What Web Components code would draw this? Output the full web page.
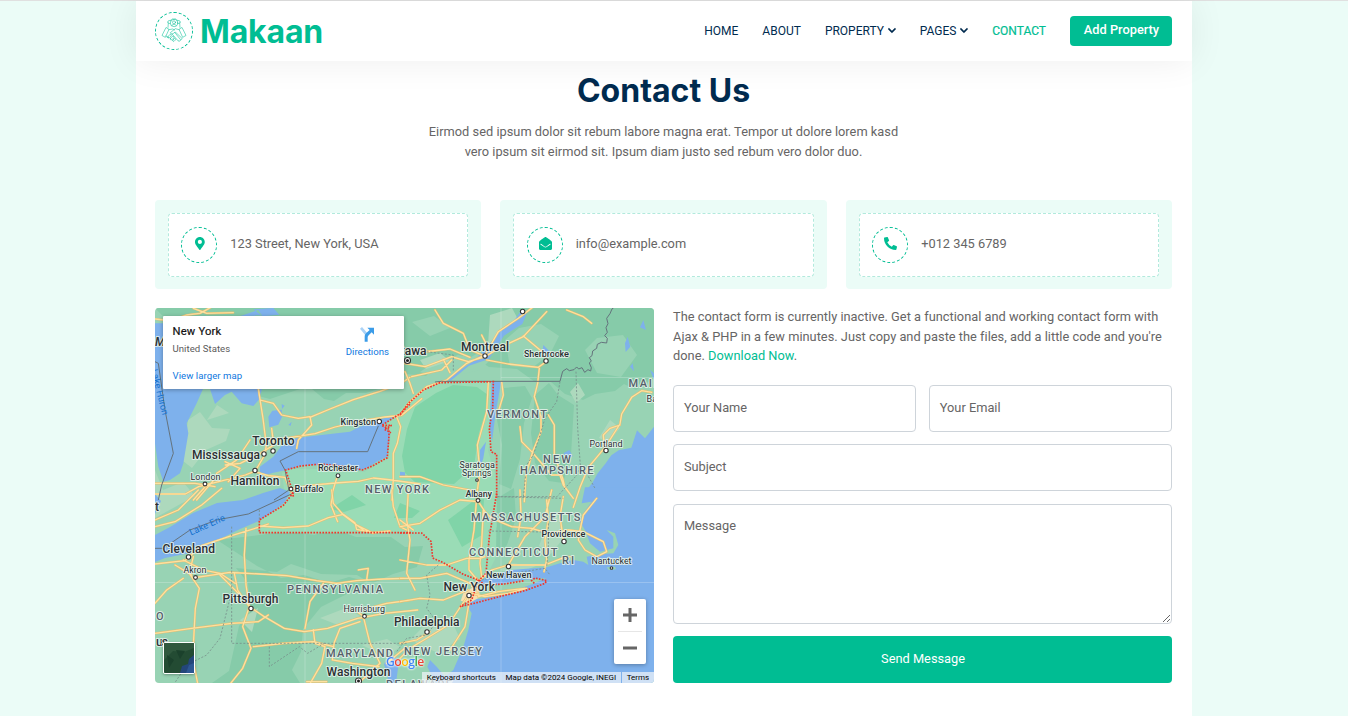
<!DOCTYPE html>
<html lang="en">
<head>
<meta charset="utf-8">
<title>Makaan - Contact</title>
<style>
:root{--primary:#00bd93;--mint:#ebfcf7;--dark:#002b4f;--body:#666565}
html,body{margin:0;height:100%;overflow:hidden}
body{background:var(--mint);font:12.8px/19.2px Roboto,"Liberation Sans",sans-serif;color:var(--body)}
</style>
</head>
<body>
<makaan-page></makaan-page>
<script>
const define = (name, css, html) => customElements.define(name, class extends HTMLElement {
  constructor() {
    super();
    const t = document.createElement('template');
    t.innerHTML = `<style>*{box-sizing:border-box}${css}</style>${typeof html === 'function' ? html(this) : html}`;
    this.attachShadow({ mode: 'open' }).append(t.content.cloneNode(true));
  }
});

const ICONS = {
  pin: ['384', 'M172.268 501.67C26.97 291.031 0 269.413 0 192 0 85.961 85.961 0 192 0s192 85.961 192 192c0 77.413-26.97 99.031-172.268 309.67-9.535 13.774-29.93 13.773-39.464 0zM192 272c44.183 0 80-35.817 80-80s-35.817-80-80-80-80 35.817-80 80 35.817 80 80 80z'],
  mail: ['512', 'M512 464c0 26.51-21.49 48-48 48H48c-26.51 0-48-21.49-48-48V200.724a48 48 0 0 1 18.387-37.776c24.913-19.529 45.501-35.365 164.2-121.511C199.412 29.17 232.797-.347 256 .003c23.198-.354 56.596 29.172 73.413 41.433 118.687 86.137 139.303 101.995 164.2 121.512A48 48 0 0 1 512 200.724V464zm-65.666-196.605c-2.563-3.728-7.7-4.595-11.339-1.907-22.845 16.873-55.462 40.705-105.582 77.079-16.825 12.266-50.21 41.781-73.413 41.43-23.211.344-56.559-29.143-73.413-41.43-50.114-36.37-82.734-60.204-105.582-77.079-3.639-2.688-8.776-1.821-11.339 1.907l-9.072 13.196a7.998 7.998 0 0 0 1.839 10.967c22.887 16.899 55.454 40.69 105.303 76.868 20.274 14.781 56.524 47.813 92.264 47.573 35.724.242 71.961-32.771 92.264-47.573 49.85-36.179 82.418-59.97 105.303-76.868a7.998 7.998 0 0 0 1.839-10.967l-9.071-13.196z'],
  phone: ['512', 'M497.39 361.8l-112-48a24 24 0 0 0-28 6.9l-49.6 60.6A370.66 370.66 0 0 1 130.6 204.11l60.6-49.6a23.94 23.94 0 0 0 6.9-28l-48-112A24.16 24.16 0 0 0 122.6.61l-104 24A24 24 0 0 0 0 48c0 256.5 207.9 464 464 464a24 24 0 0 0 23.4-18.6l24-104a24.29 24.29 0 0 0-14.01-27.6z'],
  chevron: ['448', 'M207.029 381.476L12.686 187.132c-9.373-9.373-9.373-24.569 0-33.941l22.667-22.667c9.357-9.357 24.522-9.375 33.901-.04L224 284.505l154.745-154.021c9.379-9.335 24.544-9.317 33.901.04l22.667 22.667c9.373 9.373 9.373 24.569 0 33.941L240.971 381.476c-9.373 9.372-24.569 9.372-33.942 0z']
};
const icon = (n, h) => `<svg viewBox="0 0 ${ICONS[n][0]} 512" height="${h}" width="${h * ICONS[n][0] / 512}" fill="currentColor"><path d="${ICONS[n][1]}"/></svg>`;

define('makaan-logo',
  `:host{display:flex;align-items:center;color:var(--primary)}
   .ring{width:38px;height:38px;border:1px dashed;border-radius:50%;display:grid;place-items:center;margin-right:7px}
   .name{font:700 32px/38px Inter,"Liberation Sans",sans-serif;letter-spacing:-.15px;padding-top:1px}`,
  `<span class="ring"><svg width="26" height="26" viewBox="0 0 78 78" fill="none" stroke="currentColor" stroke-width="1.6" stroke-linejoin="round" stroke-linecap="round">
    <circle cx="39" cy="15" r="11"/><circle cx="39" cy="13" r="4.5"/><path d="M32 23c1-5 13-5 14 0M28 9l6-6h10l6 6M27 17l-7-3 1-5 7-2M51 17l7-3-1-5-7-2M22 15l-1 13M56 15l1 13"/>
    <path d="M16 29l8 5-11 24-9-5zM62 29l-8 5 11 24 9-5zM24 35l11-2 6 3M54 35l-11-3-15 12c1 5 8 5 12 0l4-1 17 16M15 54l8 5M41 43l16 20M34 49l17 19M20 57l7-8c4-1 5 2 3 5l-4 5c-4 2-8 0-6-2zM28 62l6-7c4-1 6 2 4 5l-5 5c-4 1-7 0-5-3zM36 66l4-5c4 0 5 3 3 5l-4 4c-4 1-5-2-3-4zM52 69c4 2 7 0 6-4 4 1 6-2 5-5"/>
  </svg></span><span class="name">Makaan</span>`);

define('nav-link',
  `:host{display:flex;align-items:center;gap:4px;font-size:12px;color:var(--dark)}
   span{padding-top:1px}
   svg{stroke:currentColor;stroke-width:20}
   :host([active]){color:var(--primary);-webkit-text-stroke:.2px}`,
  el => `<span><slot></slot></span>${el.hasAttribute('menu') ? icon('chevron', 9) : ''}`);

define('site-nav',
  `:host{display:flex;justify-content:space-between;align-items:center;height:60px;padding:0 20px 0 19px;background:#fff;
     box-shadow:0 0 36px rgba(0,0,0,.07);position:relative;z-index:1}
   nav{display:flex;align-items:center;gap:24px}
   .btn{width:102px;height:30px;border-radius:4px;background:var(--primary);color:#fff;font-weight:500;font-size:12.8px;line-height:28px;text-align:center;padding-left:1px}`,
  `<makaan-logo></makaan-logo>
   <nav><nav-link>HOME</nav-link><nav-link>ABOUT</nav-link><nav-link menu>PROPERTY</nav-link><nav-link menu>PAGES</nav-link><nav-link active>CONTACT</nav-link><span class="btn">Add Property</span></nav>`);

define('info-card',
  `:host{display:block;flex:1;background:var(--mint);border-radius:4px;padding:12.8px;height:89.2px}
   .in{height:64px;border:1px dashed rgba(0,185,142,.3);border-radius:4px;background:#fff;display:flex;align-items:center;padding:0 12.8px}
   .ring{width:36px;height:36px;border:1px dashed var(--primary);border-radius:50%;display:grid;place-items:center;color:var(--primary);margin-right:12.8px}
   svg{display:block;margin:-3px 0 0 .8px}
   .t{padding-bottom:2px}`,
  el => `<div class="in"><span class="ring">${icon(el.getAttribute('icon'), 13)}</span><span class="t"><slot></slot></span></div>`);

const city = (x, y, r = 2.2) => `<circle cx="${x}" cy="${y}" r="${r}" fill="#fff" stroke="#333" stroke-width="1.1"/>`;
const label = (t, x1, x2, y, c) => `<text class="${c}" x="${x1}" y="${y}" textLength="${x2 - x1}">${t}</text>`;

define('map-canvas',
  `:host{display:block}
   svg{display:block;width:100%;height:100%}
   text{font-family:Roboto,"Liberation Sans",sans-serif;paint-order:stroke;stroke:#e6f3ec;stroke-opacity:.85;stroke-width:2px;stroke-linejoin:round;fill:#2b2f33}
   .big{font-size:12px;font-weight:500}.mid{font-size:9.2px;font-weight:500}.sm{font-size:9px}
   .st{font-size:11px;font-weight:500;fill:#56606a}
   .w{font-size:9.3px;fill:#1672cf;stroke:none}
   .water{fill:#7eb1ec;stroke:none}.dark{fill:#86cba9}.pale{fill:#add9bd}
   .case{fill:none;stroke:#e5bd6f;stroke-linejoin:round;stroke-linecap:round}
   .road{fill:none;stroke:#fde1a0;stroke-linejoin:round;stroke-linecap:round}
   .line{fill:none;stroke:#64727c;stroke-width:3}
   .dash{fill:none;stroke:#78908c;stroke-width:2.5;stroke-dasharray:6 5}
   .red{fill:none;stroke:#f0362b;stroke-width:5;stroke-dasharray:5 4}`,
  () => {
    const A = 'translate(150 300) scale(.33333)', B = 'translate(400 300) scale(.33333)',
          C = 'translate(150 490) scale(.33333)', D = 'translate(400 490) scale(.33333)';
    const roads = [
      [A, 'M15 57L60 62 110 45 150 40 190 18M130 25L170 40 250 38M325 265l6 40 8 50 10 80-5 30-28 48-30 12-80 20-60 15-40 22H15M330 300l40 10 25 35 50 10 35-5 5 25-40 45-5 25M480 352l60-25 70-28 80-25 60-22 30-20M345 425l60-10 90-14 60-20 90-20 60-10 50-5 60-50M365 385l6 50-40 25-60 30-45 5M300 420l-40 60-60 40M225 485l45 20-35 40M315 515l40 12 50 5 10 25 12 25M425 567l50-10 80-8 70-5 45-10 55 6 85 12M560 535l-12 40-5 40 20 50M740 350l12 30-10 50-12 30 0 80-5 60M130 600l40-45M200 530l-60 70M15 550h120l60 10'],
      [B, 'M0 345l30-40 50-45 60-20 60-50 55-25 40-70 60-40 65-50 20-10M15 190l60 10 80-30 50 15 50-15M20 150l60 5 70-8 60 25M105 30l25 40 60 30 20 50 45 18M255 170l50-30 65-30 70-75M370 108l60 50 10 25M260 180l65 12 90 10 25-18M15 215l15 35 10 30M35 230l90-20 30-30M130 178l20 40M245 105l20 40M305 245l5 40-15 50-5 10M418 205l-5 45-10 40 20 60 0 45-25 60-20 70-5 80M360 380l5 45 30 30 60 70 25 0 10 30 30 40M445 345l18 30 0 90 25 70 5 20M265 245l-5 90-28 100 8 80-10 70M0 530l60 0 70 25 80 15 20 10M725 272l-30 20-30 50-5 30-45 70-50 60-25 60-20 60M660 375l-30 10-20 20 3 35M500 30l50 20 25 20M535 20l-20-20M725 272l30 5'],
      [C, 'M15 110l60-15 80-50 60-50M15 90l70-30 60-60M15 222l90-10 50-45 90-30 80-25 30-10M100 210l60 30 50 10 45 30M130 200l-12 50 30 45-12 60-8 150 18 90M140 262l100-15 90 5 80 5 90 15 60 8 60-8 80-5 60-2M15 340l35-40 50-35M75 225l50 30M15 430l110-15 120-15 80-5 30-20M288 115l-5 80 5 90 10 65-20 60 25 65-25 60-40 50M253 250l10 50 35 50 45 30 60 35 60 10 70-10 90-30 80-15 100-10M210 255l50 50 35 30M310 470l90-10 90-5 60 15M520 280l-40 55-15 80M490 420l5 40 30 10-10 50-40 70M330 108l70 5 75-5 60-25 45-10 35 25 5 20 50 10 50-5M620 105l50 25M545 0l5 40 30 35 60 45M725 0l5 50 20 60 20 10M640 380l20 80 30 60M630 395l-60 20-18 45-5 50 60 10 80 10M690 520l-60 55M710 520l60-50M625 240l30-5-5 35M655 355l55-15 75-10M760 100l20 10M470 575l60 0M640 378l-15-10'],
      [D, 'M0 110l60-10 60-40 60-30 55 5 20 30 20 20 60 25 60 5 50 15 60-10 45 5 60 30 10 30-30 15-35-20-20-30 5-30 10-45 40-50M440 30l5 60-10 60 5 60-8 35M232 0l-10 120-15 90 0 30 25 30M0 210l80 15 60 0 60-20 40 0 15-5M250 60l-5 100-5 60 5 40M215 290l60-50 50-15 110 0 50-20 25-5M455 0l-20 80-60 60-50 85M490 20l-10 60 10 70M360 0l3 80-10 60M25 0l-5 90 10 60-10 100 25 50M0 265l60 0 80-15 70 30M0 335l60-10 70 5 50-20 25-10M205 315l-60 90-65 40-50 30-30 30M0 90l40 30M210 320l-15 90-45 70M0 460l50-10 40-25M235 320l60-15 80-10M230 265l5 55M215 310l40 10 70-10 55-15']
    ];
    return `<svg viewBox="155 308 499 375" preserveAspectRatio="none">
    <rect x="155" y="308" width="499" height="375" fill="#98d3b4"/>
    <g class="dark">
      <path d="M155 308h499v70l-18 12-12-6-9 7-20 3-12 6-18-6-14-12h-16l-18-13-28-2-14-9-17-3-18 7-14 14-20-2-18 12-22 7-20 0-12 8-10-2-12-10h-12l-30 10-20-5-50-40z"/>
      <path d="M504 388l-7 32 5 25-3 39 12 5 9-30 4-36 8-25-7-12zM535 395l-4 38 4 30 14 18 14 2 8-28 3-50-16-10-9-12zM217 540l35-4 37-5 25 4 20-6 22 8 35 0 14 10 18-1-6 21-24 7-20 9-24-6-20 6-25-8-23 3-24-12zM236 568l12 15 2 26-11 17-10 45-17 12h88l-8-13 9-18 2-23 18-22 24-12 22-14-10-6-36-1-30-10-14 8zM455 525l9 14-10 18-8 6-4-25zM494 500l3 26-9 20 8 10 11-11 9-27-2-30z"/>
    </g>
    <path d="M420 372l20-14 22 4 18-10 10 8-10 10-26 6-20 0zM505 340l14-12 22-4 18 12-9 18-18 14-22-2zM585 350l12-12 26-3 14 20-16 22-24-4zM412 322l22-6 16 12-20 8z" fill="#98d3b4"/>
    <path d="M290 492l-5 10-10 8-16 11v12h162l10 8 2 18 10 5 35 17 8-4 10-20 1-78-9-28 5-23-3-46h-53l-19 9-24 25-7 5 4 13-4 22-9 8-14 8-22-3h-50l-10 4 2 16z" fill="#9adcb6"/>
    <path d="M436 393l-21 14-8 22-5 27 3 17 10 9 39 2 20-18 5-33 7-22 2-16-11-8-24-2zM400 503l20 8-8 7h-18zM448 520l24-18 12-3-2 36-20 12zM330 509l22-14 14 10-22 7z" fill="#80d4a8"/>
    <g class="pale"><path d="M188 420l12-8 12 16 18 1-4 12-20 9-14 18-9-7zM155 470l8 20 20-8 12 14-40 22zM207 420l10-15 12 8zM570 392l8-9 7 12-9 8zM610 420l10 8-12 14-9-4zM545 530l12-16 8 22-14 18-12-8zM490 315l22-7 8 15-20 14-12 8zM500 570l10-7 26 3-22 9zM240 620l18-12-6 24zM320 618l26-10 14 8-22 9zM362 645l25-6 13 8-14 10zM410 640l18-18 22-5 10 22-22 14zM420 360l20-7 10 8-24 8z"/></g>
    <g transform="${A}" class="water">
      <path d="M15 70h30v195h115l-20 45-30 60 5 30-15 90-10 30-30 20-20 5-15-45-10-70zM180 267l15 45 30-27 20-10 30 35 35 8 18-20 8-31zM355 350l12-18 28-3 2 20-12 25-27 8zM330 530v-30l40-30 30-40 40-15 30-5 90-10 40-5 20-10 60-25 40-10 20-5-40 30 20 25-8 70-32 15-30 20-30 7-60-12-60-5-50 2-40 13-40 8zM415 375l10-10-3 12zM395 312l9 5-8 10zM310 28l60-4 18 20-50 5zM265 50l70-5-10-15z"/>
    </g>
    <path class="water" d="M155 535l15-8 23-14 24-10 26-3 20-7 17-5 10 4-5 10-10 8-16 11-19 8-18 9-17 12-15 3-15 3-10 2-10 4zM155 494l6 7-6 13z"/>
    <g transform="${B}" class="water">
      <path d="M785 350l-50 65-24-24-17 52-38 8-22 15-18 25-24 30-15 28-22 27-3 26h233zM135 240l90-60 75-85 40-30 20-28 22 0-15 35-55 35-45 70-60 20-55 45zM275 245h28l-10 60-8 50-9 70-8-50 3-50zM240 450l18-25-8 50-10 30zM490 460l18-10 10 18-16 10zM430 135l20 20-5 20-20-5zM675 130l8-20 8 30-14 16zM720 82l10-22 8 30zM690 200l8-10 4 24zM750 210l12 10v20zM0 515l15 2v12H0z"/>
    </g>
    <g transform="${D}">
      <path class="water" d="M555-8l-10 48 30-5-25 35-10 25 15 25 15 40 30 25 40-10v-35l-20-20 25 10 10 35-15 25-40 3-40 7 5 25-15-10-30-5-20 5-20 5-40 12-110 8-70 22-40 18 70 5 80-15 70-5-40 15-70 25-90 20-35 5-5 15 15 25-10 50-15 50-30 70-25 20-25-30-20-20-8 20 20 40 18 30h670V-8z"/>
      <path fill="#98d3b4" d="M215 325l55-32 90-18 72-10-32 16-70 24-90 22zM620 232l25-2 3 8-22 2z"/>
      <path fill="#f7dfae" d="M190 310l40-25 12 35-35 20-25-8z"/>
    </g>
    <path class="water" d="M384 664l7-9 8 6-3 22h-7z"/>
    <path d="M305 389v294M501 308v375M155 582.500h499M501 377.500h153" stroke="#fff" stroke-opacity=".22" fill="none"/>
    ${roads.map(([t, d]) => `<g transform="${t}"><path class="case" stroke-width="6.500" d="${d}"/><path class="road" stroke-width="3.800" d="${d}"/></g>`).join('')}
    <g transform="${A}"><path class="line" d="M15 185l10 5 20 140 25 130-35 95-10 45M685 378l-32 77H445l-55 28 15 27 12 60-45 30"/></g>
    <g transform="${B}"><path class="line" d="M105 246l20-2h355l8-30 12-8 8 6 14-3 8-8 6 6 10-4 8 14 10-8 8 4 2-10-6-14 6-6-6-10 8-6 2-14 12-8 2-12 12-6 16 2 2-14-8-8 8-10-4-14 6-12-4-16 10-14 6-14 12-10"/>
      <path class="dash" d="M480 245l-10 60-35 50-15 50-20 60-20 30-10 100M528 215l5 170 8 110-10 30-60 65-180 0M560 520l25 45M80 155l80 10v50"/></g>
    <g transform="${C}"><path class="line" d="M15 175h25l80-55 80-30 95-18 140-65"/>
      <path class="dash" d="M245 110v350h525M328 60v40M245 305l-15 60-20 80-40 50-60 30-40 60M358 470v60l90-60 25 20 50-30"/></g>
    <g transform="${D}"><path class="dash" d="M290 20l200 5M265 123l170 3M445 100v80l-5 50M245 270l60-15 130-20 15 20M115 225l-35 30 10 60-10 40 30 40-30 40-60 10-30 40"/></g>
    <g transform="${A}"><path class="red" d="M430 590l-5-25-18-55 45-12 60-6 80 8 45 10 30-12 45-25 5-65 0-20-22-12 30 0-22 12 20 10M697 375l55-35 30-30"/></g>
    <g transform="${B}"><path class="red" d="M0 345l25-35 45-40 50-22 160-3-2 80-10 60 5 70 17 8v130"/></g>
    <g transform="${C}"><path class="red" d="M430 8l-30 38-72 44v38h455"/></g>
    <g transform="${D}"><path class="red" d="M0 129h65l28 25 5 50 32 14 60 35 45 17-10 30-10 30-35 20 50-12 75-20 70-16 60-22 5-8-35-8-10 8 10 10M290 10l-22 130-10 110-20 20 15 15 60-3 60-10"/></g>
    ${[[264,454],[273,451],[255,470.5],[379.300,421.500],[485,356],[546,361],[606,450.500],[522.600,311.500],[188.500,557],[251,608.500],[564,541.500],[508.500,566.500],[427,632],[469,595.500]].map(c => city(...c)).join('')}
    ${[[205,484],[338,475.700],[291,489],[478,500.500],[195.500,577.500],[364.500,616.300],[477,480,1.300],[611.500,568,1.300]].map(([x,y,r]) => city(x,y,r||1.9)).join('')}
    ${[[407.500,360.500],[358.500,681]].map(([x,y]) => city(x,y,3) + `<circle cx="${x}" cy="${y}" r="1.500" fill="#222"/>`).join('')}
    ${label('MAINE',628.500,669,386.500,'st')}${label('VERMONT',487,547,418,'st')}${label('NEW',543,571,462.500,'st')}${label('HAMPSHIRE',520,593.500,474,'st')}
    ${label('NEW YORK',365,429,493,'st')}${label('MASSACHUSETTS',471,580.500,521,'st')}${label('CONNECTICUT',469,557.500,556,'st')}${label('RI',562,574,563.500,'st')}
    ${label('PENNSYLVANIA',287,383,593,'st')}${label('MARYLAND',326,393,657,'st')}${label('NEW JERSEY',404,482,655,'st')}${label('DELAWARE',386,452,688,'st')}${label('O',156,164,619.500,'st')}
    ${label('Ottawa',388.500,426.500,355,'big')}${label('Montreal',461,509,350.500,'big')}${label('Toronto',252.300,294.500,445,'big')}${label('Mississauga',192,260,458.500,'big')}${label('Hamilton',230.500,279.500,484.500,'big')}
    ${label('Cleveland',162.500,215,552.500,'big')}${label('Pittsburgh',222.500,278.500,603,'big')}${label('New York',443.500,495,590.500,'big')}${label('Philadelphia',394,459.500,626,'big')}${label('Washington',326.500,390.500,675.500,'big')}
    ${label('us',156,168,645.500,'big')}${label('t',155,158,511,'big')}
    ${label('Sherbrooke',524,569,357,'mid')}${label('Kingston',340.500,376,425,'mid')}${label('Rochester',318,358,471,'mid')}${label('Buffalo',294.500,323.500,492,'mid')}${label('Albany',465.500,492,496.500,'mid')}${label('Providence',541.500,585.500,537,'mid')}${label('New Haven',486,531.500,578,'mid')}
    ${label('London',190.500,220.500,480,'sm')}${label('Akron',183.500,206.500,573,'sm')}${label('Harrisburg',343.500,385,612,'sm')}${label('Portland',589.500,622.500,446.500,'sm')}${label('Nantucket',591.500,631.500,564,'sm')}${label('Saratoga',459.500,495,467.500,'sm')}${label('Springs',462,491.500,476,'sm')}${label('Bangor',646.500,676,402,'sm')}
    <text class="w" transform="translate(191 535.500) rotate(-24)" textLength="38">Lake Erie</text>
    <text class="w" transform="translate(151 370) rotate(76)" textLength="47">Lake Huron</text>
    <text class="big" x="155" y="345.500" font-style="italic">M</text>
    </svg>`;
  });

define('map-place-card',
  `:host{display:grid;grid-template-columns:1fr auto;width:241px;height:73px;padding:7px 15px 0 9.600px;background:#fff;box-shadow:0 1px 4px rgba(0,0,0,.3);border-radius:1px;font-size:9.600px;line-height:15px;color:#5b5b5b}
   b{display:block;font-weight:400;-webkit-text-stroke:.2px;font-size:11.2px;line-height:18px;letter-spacing:.2px;color:#111}
   .link{color:#0f78e0}.more{margin-top:11px;letter-spacing:.05px}.sub{line-height:16px;letter-spacing:.05px}
   .dir{display:flex;flex-direction:column;align-items:center;padding-top:3.500px}
   svg{display:block;margin-bottom:2px}`,
  `<div><b>New York</b><div class="sub">United States</div><div class="more link">View larger map</div></div>
   <div class="dir"><svg width="16" height="16" viewBox="0 0 48 48"><path d="M3 8l6-5 15 17-5 8z" fill="#a9d2f7"/><path d="M17 47V32c0-5 2-8 5-11l10-9-7-7h20v21l-7-7-9 9c-2 2-3 4-3 6v13z" fill="#3b9ce8"/></svg><span class="link">Directions</span></div>`);

define('zoom-control',
  `:host{display:flex;flex-direction:column;align-items:center;width:32px;height:65px;background:#fff;border-radius:2px;box-shadow:0 1px 4px rgba(0,0,0,.3)}
   i{flex:1;display:grid;place-items:center}hr{width:24px;margin:0;border:0;height:1px;background:#e6e6e6}svg{display:block}`,
  `<i><svg width="14" height="14"><path d="M0 7h14M7 0v14" stroke="#666" stroke-width="3"/></svg></i><hr><i><svg width="14" height="14"><path d="M0 7h14" stroke="#666" stroke-width="3"/></svg></i>`);

define('map-credits',
  `:host{display:flex;font-size:8px;line-height:11px;height:11px;color:#000;letter-spacing:-.01px}
   span{background:rgba(240,244,248,.72);padding:0 4.800px;white-space:nowrap}
   span+span+span{margin-left:1px}`,
  `<span>Keyboard shortcuts</span><span>Map data ©2024 Google, INEGI</span><span>Terms</span>`);

define('google-map',
  `:host{display:block;position:relative;height:375px;border-radius:4px;overflow:hidden}
   map-canvas{height:375px}
   map-place-card{position:absolute;left:8px;top:8px}
   zoom-control{position:absolute;right:8px;top:291px}
   map-credits{position:absolute;right:0;bottom:0}
   .sat{position:absolute;left:8px;top:334px;width:32px;height:32px;border:1px solid #fff;border-radius:2px;box-shadow:0 1px 3px rgba(0,0,0,.3);overflow:hidden}
   .sat svg{display:block}
   .g{position:absolute;left:231px;top:346px;font:600 12.200px/16px "Open Sans",sans-serif;letter-spacing:-.5px;filter:drop-shadow(0 0 .8px #fff) drop-shadow(0 0 .5px #fff)}`,
  `<map-canvas></map-canvas><map-place-card></map-place-card>
   <div class="sat"><svg width="30" height="30"><rect width="30" height="30" fill="#234b33"/><path d="M0 0h30v5L20 9 9 8 0 17z" fill="#30583e"/><path d="M3 12l7 5-5 8zM12 7l9 1-5 8z" fill="#1b412c"/><path d="M30 12l-5 4-1 5-6 2-2 7h14z" fill="#23467a"/><path d="M30 20l-5 2-3 8h8z" fill="#2d5793"/></svg></div>
   <div class="g"><span style="color:#4285f4">G</span><span style="color:#ea4335">o</span><span style="color:#fbbc05">o</span><span style="color:#4285f4">g</span><span style="color:#34a853">l</span><span style="color:#ea4335">e</span></div>
   <zoom-control></zoom-control><map-credits></map-credits>`);

define('form-field',
  `:host{display:grid;height:47px}
   :host([area]){height:120px}
   input,textarea,label{grid-area:1/1}
   input,textarea{width:100%;height:100%;margin:0;border:1px solid #ced4da;border-radius:4px;background:#fff;font:inherit;outline:0;min-width:0}
   label{z-index:1;padding:12.800px 10.800px;pointer-events:none}`,
  el => `${el.hasAttribute('area') ? '<textarea id="f"></textarea>' : '<input id="f">'}<label for="f"><slot></slot></label>`);

define('contact-form',
  `:host{display:flex;flex-direction:column;gap:12.300px}
   p{margin:0 0 5.700px;height:59px;line-height:19.600px;position:relative;top:-1px;letter-spacing:.012px}
   .a{color:var(--primary)}
   .row{display:grid;grid-template-columns:1fr 1fr;gap:12.800px}
   .send{height:47px;border-radius:4px;background:var(--primary);color:#fff;display:grid;place-items:center;padding:0 0 2px 1px}`,
  `<p>The contact form is currently inactive. Get a functional and working contact form with Ajax &amp; PHP in a few minutes. Just copy and paste the files, add a little code and you're done. <span class="a">Download Now</span>.</p>
   <div class="row"><form-field>Your Name</form-field><form-field>Your Email</form-field></div>
   <form-field>Subject</form-field><form-field area>Message</form-field><div class="send">Send Message</div>`);

define('makaan-page',
  `:host{display:block;height:716px;border-top:1px solid #e0e0e0;box-sizing:border-box}
   .wrap{width:1056px;height:715px;margin:0 0 0 136px;background:#fff}
   .head{text-align:center;height:139px;padding-top:11px;box-sizing:border-box}
   h1{margin:0 0 11.600px;font:700 32px/38.400px Inter,"Liberation Sans",sans-serif;color:var(--dark)}
   .head p{margin:0 auto;width:480px;line-height:19.800px;letter-spacing:.015px}
   .cards{display:flex;gap:19.200px}
   main{width:1017.200px;margin-left:18.900px}
   .cols{display:grid;grid-template-columns:1fr 1fr;gap:19.200px;margin-top:18.800px}`,
  `<div class="wrap"><site-nav></site-nav><main>
    <div class="head"><h1>Contact Us</h1><p>Eirmod sed ipsum dolor sit rebum labore magna erat. Tempor ut dolore lorem kasd vero ipsum sit eirmod sit. Ipsum diam justo sed rebum vero dolor duo.</p></div>
    <div class="cards"><info-card icon="pin">123 Street, New York, USA</info-card><info-card icon="mail">info@example.com</info-card><info-card icon="phone">+012 345 6789</info-card></div>
    <div class="cols"><google-map></google-map><contact-form></contact-form></div>
  </main></div>`);
</script>
</body>
</html>
